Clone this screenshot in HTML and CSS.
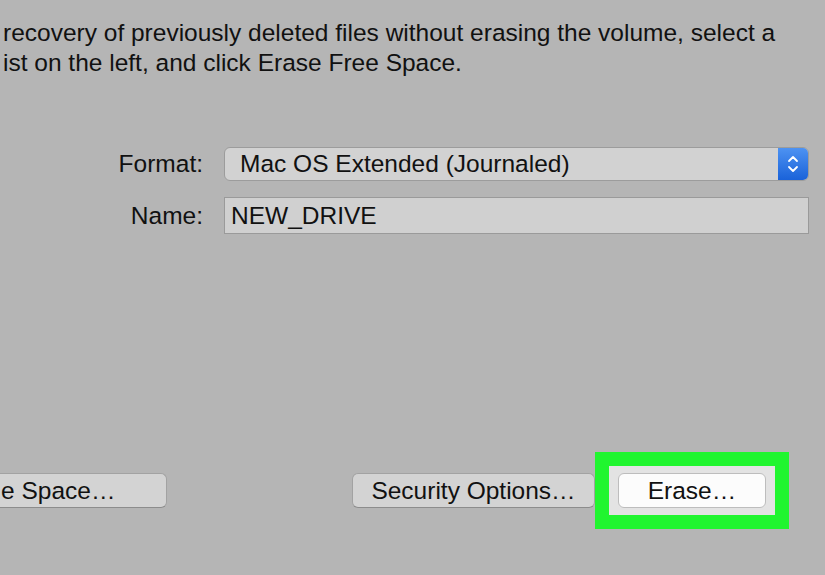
FILE: index.html
```html
<!DOCTYPE html>
<html lang="en">
<head>
    <meta charset="UTF-8">
    <meta name="viewport" content="width=device-width, initial-scale=1.0">
    <title>Erase - Disk Utility</title>
    <link rel="stylesheet" href="styles.css">
</head>
<body>
    <div class="erase-pane">
        <!-- Help text (pane is cropped on the left) -->
        <p class="intro">recovery of previously deleted files without erasing the volume, select a<br>ist on the left, and click Erase Free Space.</p>

        <form class="erase-form" onsubmit="return false">
            <label for="format">Format:</label>
            <div class="popup">
                <span class="popup-value" id="format">Mac OS Extended (Journaled)</span>
                <span class="stepper">
                    <svg width="14" height="22" viewBox="0 0 14 22">
                        <path d="M3 8 L7 4 L11 8" fill="none" stroke="#fff" stroke-width="1.8" stroke-linecap="round" stroke-linejoin="round"/>
                        <path d="M3 14 L7 18 L11 14" fill="none" stroke="#fff" stroke-width="1.8" stroke-linecap="round" stroke-linejoin="round"/>
                    </svg>
                </span>
            </div>

            <label for="name">Name:</label>
            <input type="text" id="name" class="name-field" value="NEW_DRIVE">
        </form>

        <div class="button-row">
            <button class="mac-btn free-space">e Space…</button>
            <button class="mac-btn security">Security Options…</button>
            <div class="highlight">
                <button class="mac-btn erase">Erase…</button>
            </div>
        </div>
    </div>
</body>
</html>
```

FILE: styles.css
```css
body {
    margin: 0;
    padding: 0;
    background: #b5b5b5;
    font-family: 'Liberation Sans', Arial, sans-serif;
    color: #111;
    width: 825px;
    height: 575px;
    overflow: hidden;
}

.erase-pane {
    padding-top: 18px;
}

.intro {
    margin: 0;
    padding-left: 3px;
    font-size: 24.5px;
    line-height: 30px;
    white-space: nowrap;
}

.erase-form {
    display: grid;
    grid-template-columns: 203px 585px;
    column-gap: 21px;
    row-gap: 16px;
    align-items: center;
    margin-top: 69px;
}

.erase-form label {
    text-align: right;
    font-size: 24.5px;
}

.popup {
    display: flex;
    height: 34px;
    box-sizing: border-box;
    border: 1px solid #9c9c9c;
    border-radius: 6px;
    background: #d2d2d2;
    overflow: hidden;
}

.popup-value {
    flex: 1;
    padding-left: 15px;
    font-size: 24.5px;
    line-height: 32px;
}

.stepper {
    width: 30px;
    display: flex;
    align-items: center;
    justify-content: center;
    background: linear-gradient(#4d92f2, #1a62d9);
}

.name-field {
    height: 37px;
    box-sizing: border-box;
    margin: 0;
    padding: 0 6px;
    border: 1px solid #9a9a9a;
    background: #d0d0d0;
    font-family: inherit;
    font-size: 24.5px;
    color: #111;
    outline: none;
}

.button-row {
    display: flex;
    align-items: center;
    margin-top: 218px;
}

.mac-btn {
    height: 35px;
    box-sizing: border-box;
    margin: 0;
    border: 1px solid #a2a2a2;
    border-bottom-color: #8c8c8c;
    border-radius: 6px;
    background: #d3d3d3;
    font-family: inherit;
    font-size: 24.5px;
    color: #111;
    padding: 0;
}

.free-space {
    width: 200px;
    margin-left: -33px;
    text-align: left;
    padding-left: 33px;
}

.security {
    width: 243px;
    margin-left: 185px;
}

.highlight {
    border: 14px solid #20f52f;
    padding: 7px 9px;
    background: #e3e3e3;
}

.erase {
    display: block;
    width: 148px;
    background: #fcfcfc;
    border-color: #bdbdbd;
}
```
